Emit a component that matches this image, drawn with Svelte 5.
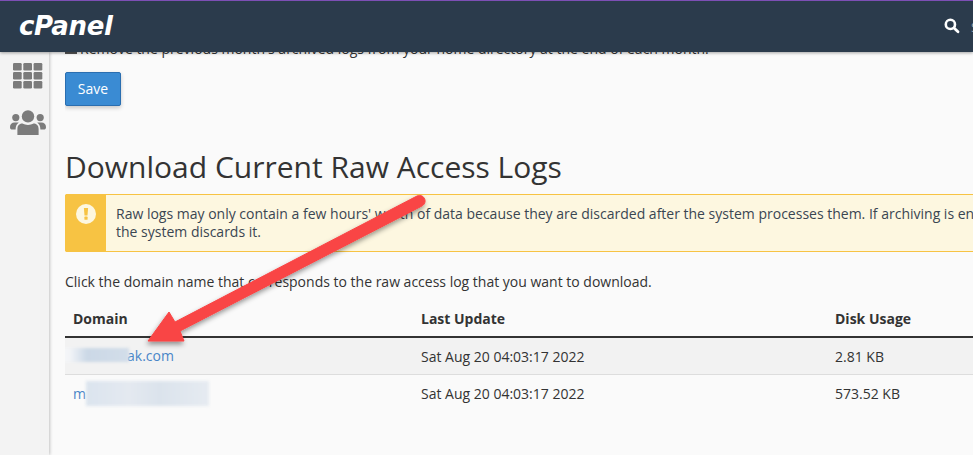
<script>
  const rows = [
    { pre: '', domain: 'ak.com', pad: 'wide', updated: 'Sat Aug 20 04:03:17 2022', usage: '2.81 KB' },
    { pre: 'm', domain: '', pad: 'none', updated: 'Sat Aug 20 04:03:17 2022', usage: '573.52 KB' }
  ];
</script>

<div class="page">
  <header class="topbar">
    <span class="logo">cPanel</span>
    <div class="search">
      <svg width="16" height="16" viewBox="0 0 16 16">
        <circle cx="6.4" cy="6.4" r="4.6" fill="none" stroke="#fff" stroke-width="2.6" />
        <path d="M10 10 L14 13.8" stroke="#fff" stroke-width="2.8" stroke-linecap="round" />
      </svg>
      <span class="search-text">S</span>
    </div>
  </header>

  <div class="body">
    <aside class="sidebar">
      <svg class="grid-icon" width="30" height="26" viewBox="0 0 30 26">
        {#each [0, 1, 2] as r}
          {#each [0, 1, 2] as c}
            <rect x={c * 10.3} y={r * 9} width="8.7" height="7.4" rx="1.2" fill="#7b7b7b" />
          {/each}
        {/each}
      </svg>
      <svg class="users-icon" width="36" height="26" viewBox="0 0 36 26">
        <g fill="#7b7b7b">
          <circle cx="18" cy="6.4" r="6.2" />
          <circle cx="5.8" cy="7.6" r="3.6" />
          <circle cx="30.2" cy="7.6" r="3.6" />
          <path d="M7.4 25 V19 C7.4 15 10 13.6 12.4 13.6 C15.5 15.4 20.5 15.4 23.6 13.6 C26 13.6 28.6 15 28.6 19 V25 Z" />
          <path d="M0 17 C0 14 2 12.4 4.4 12.4 L8.8 12.4 C7 13.8 5.6 15.6 5.6 19.4 H1.4 C.6 19.4 0 18.6 0 17 Z" />
          <path d="M36 17 C36 14 34 12.4 31.6 12.4 L27.2 12.4 C29 13.8 30.4 15.6 30.4 19.4 H34.6 C35.4 19.4 36 18.6 36 17 Z" />
        </g>
      </svg>
    </aside>

    <main class="content">
      <p class="clipped"><span class="checkbox"></span>Remove the previous month's archived logs from your home directory at the end of each month.</p>
      <button class="save">Save</button>

      <h1>Download Current Raw Access Logs</h1>

      <div class="alert">
        <div class="alert-side">
          <svg width="20" height="20" viewBox="0 0 20 20">
            <circle cx="10" cy="10" r="10" fill="#fdf7e0" />
            <path d="M7.9 4 H12.1 L11.5 11.4 H8.5 Z" fill="#f7c343" />
            <rect x="8.4" y="12.6" width="3.2" height="3.2" rx=".6" fill="#f7c343" />
          </svg>
        </div>
        <div class="alert-text">Raw logs may only contain a few hours' worth of data because they are discarded after the system processes them. If archiving is enabled, the system archives the data before the system discards it.</div>
      </div>

      <p class="hint">Click the domain name that corresponds to the raw access log that you want to download.</p>

      <div class="table">
        <div class="row head">
          <div class="c1">Domain</div>
          <div class="c2">Last Update</div>
          <div class="c3">Disk Usage</div>
        </div>
        {#each rows as row, i}
          <div class="row" class:odd={i === 0}>
            <div class="c1">
              <span class="link">{row.pre}<span class="smudge {row.pad}"></span>{row.domain}</span>
            </div>
            <div class="c2">{row.updated}</div>
            <div class="c3">{row.usage}</div>
          </div>
        {/each}
      </div>
    </main>
  </div>

  <svg class="arrow" width="973" height="455" viewBox="0 0 973 455">
    <defs>
      <filter id="shade" x="-10%" y="-10%" width="120%" height="130%">
        <feDropShadow dx="-1" dy="3" stdDeviation="2.5" flood-color="#000" flood-opacity=".4" />
      </filter>
    </defs>
    <path
      d="M148 341 L169 312 L175 322 L417 196 C424 193 429 203 421 206.5 L180 331 L184 341 Z"
      fill="#f94545"
      stroke="#f94545"
      stroke-width="1"
      stroke-linejoin="round"
      filter="url(#shade)"
    />
  </svg>
</div>

<style>
  :global(body) {
    margin: 0;
    overflow: hidden;
  }

  .page {
    position: relative;
    width: 973px;
    height: 455px;
    overflow: hidden;
    background: #fafafa;
    font-family: "Open Sans", sans-serif;
    font-size: 14px;
    color: #333;
  }

  .topbar {
    position: relative;
    z-index: 2;
    box-sizing: border-box;
    height: 52px;
    display: flex;
    align-items: center;
    justify-content: space-between;
    background: #2b3b4c;
    border-top: 1px solid #7d4fb5;
    box-shadow: 0 1px 3px rgba(0, 0, 0, .35);
  }

  .logo {
    margin-left: 19px;
    margin-top: -1px;
    font-family: "DejaVu Sans", sans-serif;
    font-size: 26px;
    font-weight: 700;
    font-style: italic;
    letter-spacing: -.3px;
    line-height: 1;
    color: #fff;
  }

  .search {
    display: flex;
    align-items: center;
    gap: 11px;
    margin-right: -7px;
  }

  .search svg {
    margin-top: -1px;
  }

  .search-text {
    width: 9px;
    font-size: 13px;
    color: #9aa3ad;
  }

  .body {
    display: flex;
    height: 403px;
  }

  .sidebar {
    position: relative;
    z-index: 1;
    flex: none;
    box-sizing: border-box;
    width: 49px;
    padding-left: 6px;
    display: flex;
    flex-direction: column;
    align-items: center;
    background: #f3f3f3;
    box-shadow: 1px 0 3px rgba(0, 0, 0, .22);
  }

  .grid-icon {
    margin-top: 11px;
  }

  .users-icon {
    margin-top: 21px;
  }

  .content {
    flex: 1;
    min-width: 0;
    margin-left: 16px;
    overflow: hidden;
  }

  .clipped {
    height: 20px;
    margin: -13px 0 0;
    white-space: nowrap;
    line-height: 20px;
    font-size: 14px;
  }

  .checkbox {
    display: inline-block;
    width: 12px;
    height: 12px;
    margin-right: 3px;
    background: #555;
  }

  .save {
    display: block;
    box-sizing: border-box;
    width: 56px;
    height: 34px;
    margin-top: 13px;
    padding: 0 0 2px;
    border: 1px solid #2a6eb0;
    border-radius: 2px;
    background: #3a8bd3;
    box-shadow: 0 2px 4px rgba(0, 0, 0, .2);
    font-family: inherit;
    font-size: 14px;
    color: #fff;
  }

  h1 {
    margin: 43px 0 0;
    white-space: nowrap;
    font-size: 30px;
    font-weight: 400;
    line-height: 36px;
    color: #333;
  }

  .alert {
    display: flex;
    box-sizing: border-box;
    width: 1000px;
    height: 58px;
    margin-top: 9px;
    border: 1px solid #f7c343;
    border-radius: 2px;
    background: #fdf7e0;
  }

  .alert-side {
    flex: none;
    width: 41px;
    margin: -1px 0 -1px -1px;
    display: flex;
    justify-content: center;
    padding-top: 10px;
    box-sizing: border-box;
    background: #f7c343;
    border-radius: 2px 0 0 2px;
  }

  .alert-text {
    flex: none;
    width: 1150px;
    padding: 10px 0 0 10px;
    line-height: 18px;
    font-size: 14px;
    color: #3a4652;
    white-space: normal;
  }

  .hint {
    margin: 21px 0 0;
    line-height: 18px;
    white-space: nowrap;
    font-size: 14px;
  }

  .table {
    width: 908px;
    margin-top: 9px;
  }

  .row {
    display: flex;
    align-items: center;
    height: 37px;
    border-bottom: 1px solid #ddd;
    box-sizing: border-box;
  }

  .row.head {
    height: 38px;
    border-bottom: 2px solid #333;
    font-weight: 700;
  }

  .row.odd {
    background: #f2f2f2;
  }

  .row:last-child {
    border-bottom: none;
  }

  .c1 {
    flex: none;
    width: 348px;
    padding-left: 8px;
    box-sizing: border-box;
  }

  .c2 {
    flex: none;
    width: 414px;
    padding-left: 8px;
    box-sizing: border-box;
  }

  .c3 {
    flex: 1;
    padding-left: 8px;
  }

  .link {
    display: inline-flex;
    align-items: center;
    color: #4a86c8;
  }

  .smudge {
    height: 25px;
    background: #d9e2ec;
    filter: blur(1.5px);
  }

  .smudge.wide {
    width: 76px;
    height: 14px;
    margin: 0 -2px 0 -20px;
    background: linear-gradient(90deg, #fafbfc, #f2f4f7 22%, #cbd8e6 45%, #d2dde9 100%);
  }

  .smudge.none {
    width: 123px;
    background: linear-gradient(90deg, #dbe4ee, #e4e9f0 35%, #dbe3ec 60%, #e6ebf1);
  }

  .arrow {
    position: absolute;
    top: 0;
    left: 0;
    z-index: 3;
    pointer-events: none;
  }
</style>
